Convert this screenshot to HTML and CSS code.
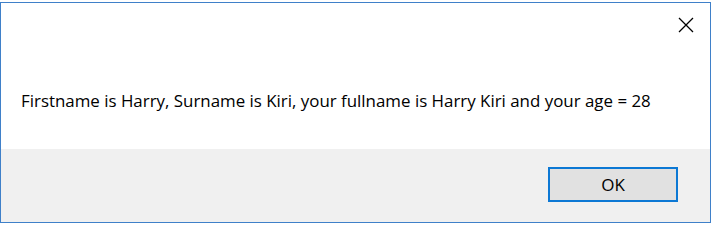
FILE: index.html
```html
<!DOCTYPE html>
<html>
  <head>
    <meta charset="utf-8">
    <title></title>
    <link rel="stylesheet" href="styles.css">
  </head>
  <body>
    <div class="dialog">
      <div class="top">
        <div class="close">
          <svg width="16" height="16" viewBox="0 0 16 16">
            <path d="M1 1 L15 15 M15 1 L1 15" stroke="#000" stroke-width="1.3" fill="none"/>
          </svg>
        </div>
        <p class="msg">Firstname is Harry, Surname is Kiri, your fullname is Harry Kiri and your age = 28</p>
      </div>
      <div class="foot">
        <button class="ok">OK</button>
      </div>
    </div>
</body>
</html>
```

FILE: styles.css
```css
  *{
    margin: 0;
    padding: 0;
    box-sizing: border-box;
  }
  body{
    background: #fff;
    font-family: "Open Sans", "Noto Sans", sans-serif;
  }
  .dialog{
    margin-top: 2px;
    width: 711px;
    height: 221px;
    border: 1px solid #3f80c9;
    display: flex;
    flex-direction: column;
  }
  .top{
    height: 146px;
    background: #fff;
    padding: 14px 0 0 20px;
  }
  .close{
    display: flex;
    justify-content: flex-end;
    padding-right: 16px;
    height: 16px;
  }
  .msg{
    margin-top: 56px;
    font-size: 16.9px;
    color: #000;
  }
  .foot{
    flex: 1;
    background: #f0f0f0;
    display: flex;
    justify-content: flex-end;
    align-items: flex-start;
    padding: 18px 32px 0 0;
  }
  .ok{
    width: 130px;
    height: 35px;
    background: #e1e1e1;
    border: 2px solid #0c78d4;
    font-family: inherit;
    font-size: 17px;
    color: #000;
  }
```
